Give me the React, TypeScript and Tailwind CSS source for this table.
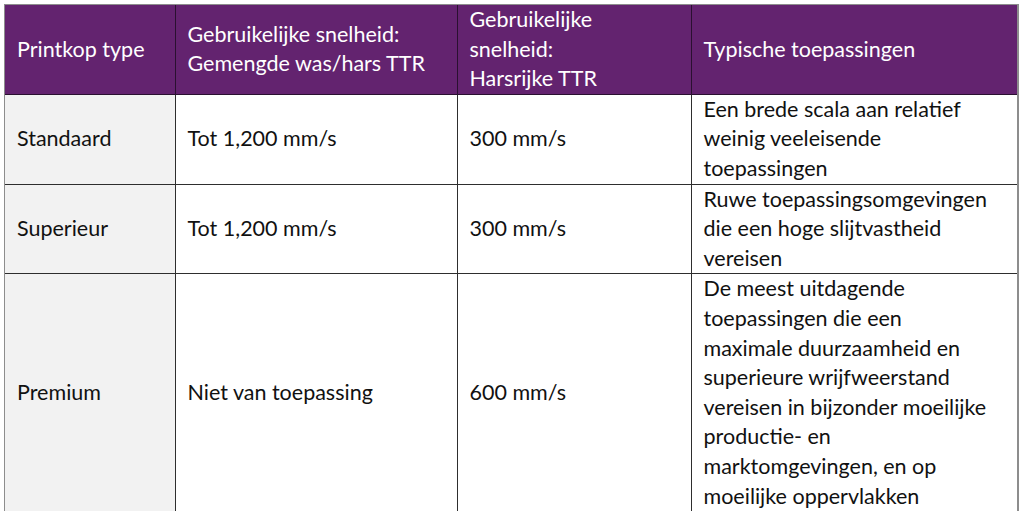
import * as React from "react";

interface Row {
  type: string;
  mixed: string;
  resin: string;
  uses: string[];
}

const rows: Row[] = [
  {
    type: "Standaard",
    mixed: "Tot 1,200 mm/s",
    resin: "300 mm/s",
    uses: ["Een brede scala aan relatief", "weinig veeleisende", "toepassingen"],
  },
  {
    type: "Superieur",
    mixed: "Tot 1,200 mm/s",
    resin: "300 mm/s",
    uses: ["Ruwe toepassingsomgevingen", "die een hoge slijtvastheid", "vereisen"],
  },
  {
    type: "Premium",
    mixed: "Niet van toepassing",
    resin: "600 mm/s",
    uses: [
      "De meest uitdagende",
      "toepassingen die een",
      "maximale duurzaamheid en",
      "superieure wrijfweerstand",
      "vereisen in bijzonder moeilijke",
      "productie- en",
      "marktomgevingen, en op",
      "moeilijke oppervlakken",
    ],
  },
];

const Lines = ({ lines }: { lines: string[] }) => (
  <>
    {lines.map((l, i) => (
      <React.Fragment key={i}>
        {l}
        {i < lines.length - 1 && <br />}
      </React.Fragment>
    ))}
  </>
);

export default function App() {
  const head = "px-3 py-0 align-middle font-normal text-left border-r border-b border-[#2a1030]";

  return (
    <div className="w-[1024px] h-[518px] bg-white pt-[4px] pl-[4px]">
      <div className="w-[1015px] h-[507px] overflow-hidden border-l border-t border-r-2 border-[#8d8d8d]">
        <table
          className="w-full border-collapse table-fixed text-[21.5px] leading-[29.6px] text-[#111]"
          style={{ fontFamily: "Lato, 'Open Sans', sans-serif" }}
        >
          <colgroup>
            <col className="w-[170px]" />
            <col className="w-[282px]" />
            <col className="w-[234px]" />
            <col />
          </colgroup>
          <thead>
            <tr className="bg-[#63236f] text-white">
              <th className={head}>Printkop type</th>
              <th className={head}>
                <Lines lines={["Gebruikelijke snelheid:", "Gemengde was/hars TTR"]} />
              </th>
              <th className={head}>
                <Lines lines={["Gebruikelijke", "snelheid:", "Harsrijke TTR"]} />
              </th>
              <th className={head + " border-r-0"}>Typische toepassingen</th>
            </tr>
          </thead>
          <tbody>
            {rows.map((r, i) => {
              const cell =
                "px-3 py-0 align-middle border-r border-[#2e2e2e]" +
                (i < rows.length - 1 ? " border-b" : "");
              return (
                <tr key={r.type}>
                  <td className={cell + " bg-[#f2f2f2]"}>{r.type}</td>
                  <td className={cell}>{r.mixed}</td>
                  <td className={cell}>{r.resin}</td>
                  <td className={cell + " border-r-0"}>
                    <Lines lines={r.uses} />
                  </td>
                </tr>
              );
            })}
          </tbody>
        </table>
      </div>
    </div>
  );
}
